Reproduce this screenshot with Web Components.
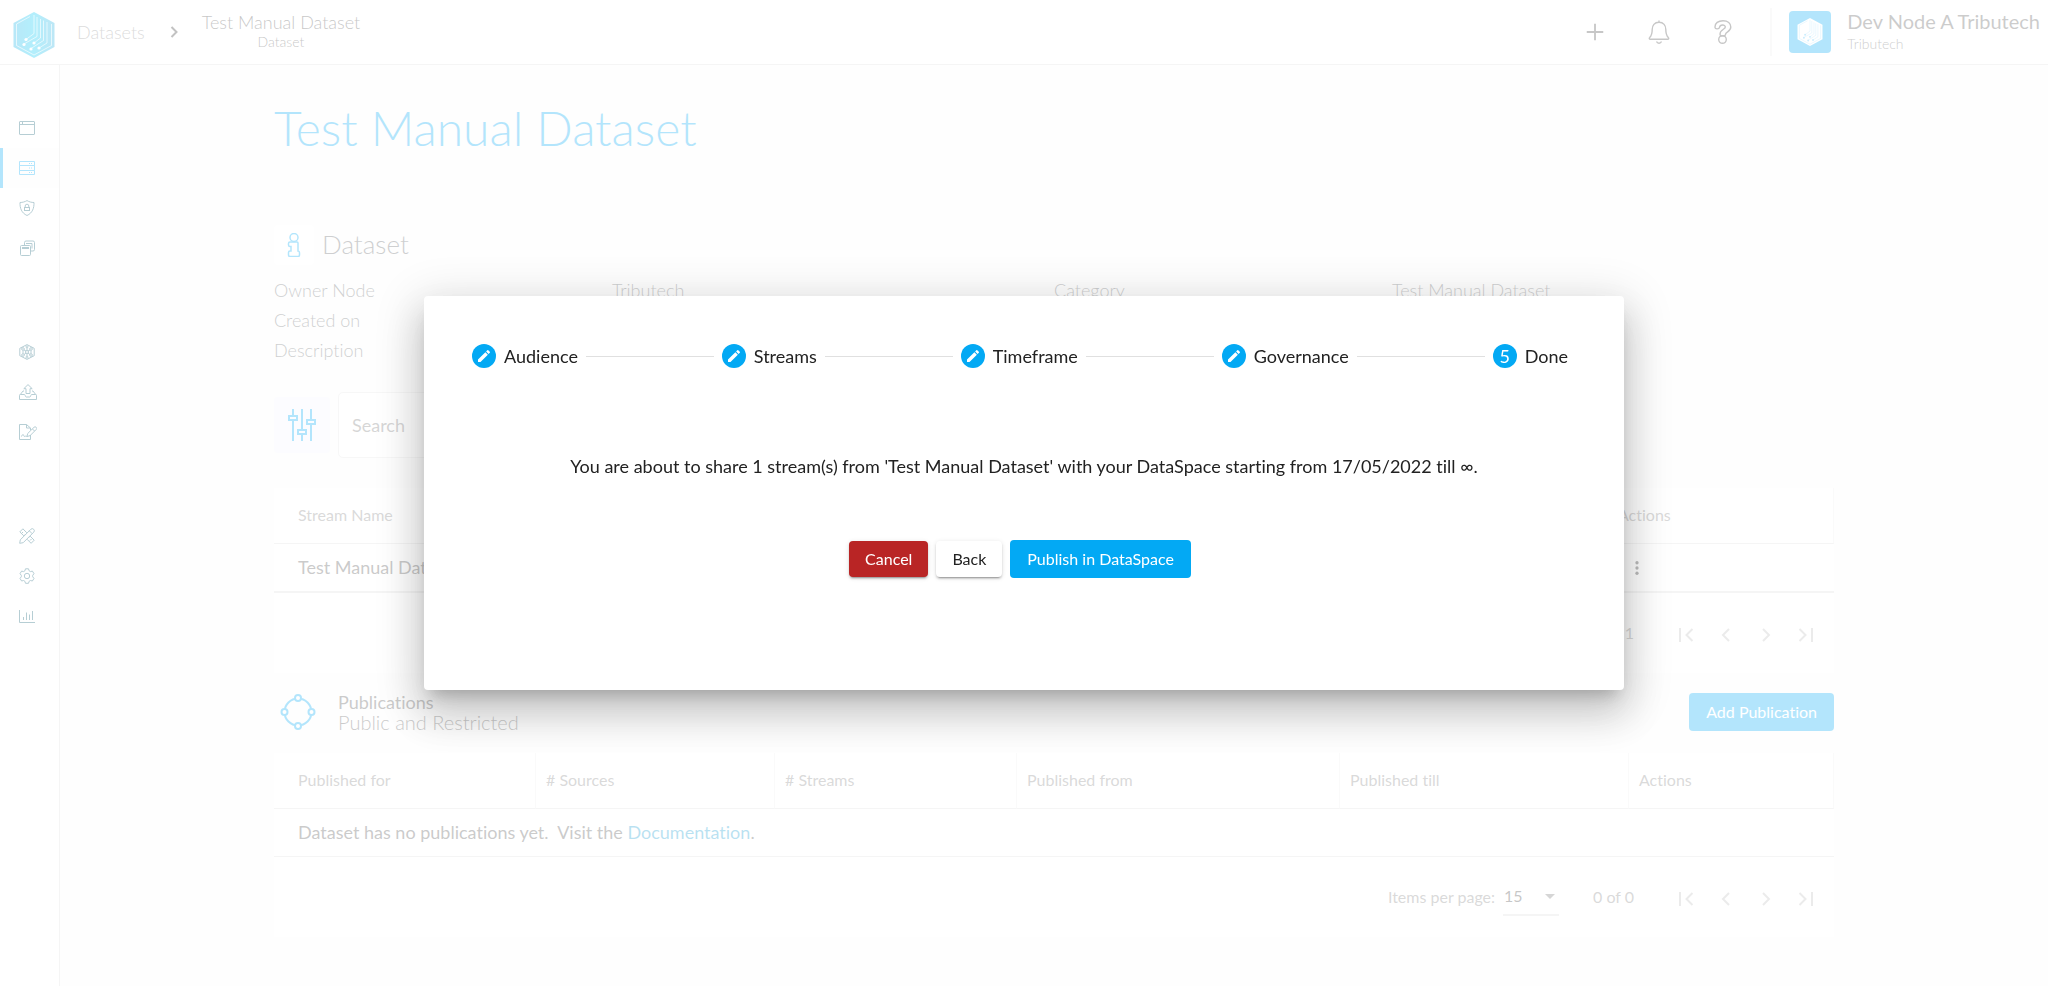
<!DOCTYPE html>
<html lang="en">
<head>
<meta charset="utf-8">
<title>Test Manual Dataset</title>
<style>
  body { margin: 0; background: #fafafa; color: #222; font-family: Lato, "Open Sans", sans-serif; font-size: 18px; font-variant-ligatures: none; }
</style>
</head>
<body>
<data-app></data-app>
<script>
const define = (name, html) => {
  const template = document.createElement('template');
  template.innerHTML = `<style>*{box-sizing:border-box}</style>` + html;
  customElements.define(name, class extends HTMLElement {
    constructor() {
      super();
      this.attachShadow({ mode: 'open' }).append(template.content.cloneNode(true));
    }
  });
};

/* Icon set: 24-unit artwork unless a viewBox is given */
const ICONS = {
  window: ['0 0 16 16', '<rect x=".5" y="1.5" width="15" height="13" rx=".5"/><path d="M.5 4.5h15M3.5 1.5v3"/>'],
  servers: ['0 0 16 16', '<path d="M.5 1.5h15v4H.5zM.5 5.5h15v5H.5zM.5 10.500h15v4H.5z"/><path d="M10 3.500h1M12 3.500h1M10 8h1M12 8h1M10 12.500h1M12 12.500h1"/>'],
  shield: ['0 0 16 16', '<path d="M8 .6C10 1.800 12.500 2.500 15 2.500C15.200 8 13.500 13 8 15.500C2.500 13 .8 8 1 2.500C3.500 2.500 6 1.800 8 .6Z"/><rect x="5.500" y="7.500" width="5" height="3"/><path d="M6.200 7.500V6a1.800 1.800 0 0 1 3.600 0v1.500"/>'],
  stack: ['0 0 16 16', '<rect x="1.500" y="5.500" width="10" height="10" rx="1"/><rect x="3.500" y="7.500" width="6" height="1"/><path d="M5.500 5.500V2.500a1.500 1.500 0 0 1 1.500-1.500h7a1.500 1.500 0 0 1 1.500 1.500v7a1.500 1.500 0 0 1-1.500 1.500h-2.500M7 3.500h6v5"/>'],
  network: ['0 0 16 16', '<path d="M8 .6 15.200 4.300v7.400L8 15.400.8 11.700V4.300Z"/><circle cx="8" cy="8" r="1.500"/><circle cx="4" cy="5" r="1.300"/><circle cx="12" cy="5" r="1.300"/><circle cx="4" cy="11" r="1.300"/><circle cx="12" cy="11" r="1.300"/><circle cx="8" cy="2.800" r="1"/><circle cx="8" cy="13.200" r="1"/><path d="M5 6l2 1M11 6 9 7M5 10.500 7 9M11 10.500 9 9M8 4v2.500M8 9.500V12M4 6.500v3M12 6.500v3"/>'],
  upload: ['0 0 18 16', '<path d="M9 .6 13.200 4.700H11v4.800H7V4.700H4.800Z"/><path d="M5 7H4L1.300 10.500M13 7h1l2.700 3.500M.5 15.500v-4.200c0-.5.300-.8.800-.8H5.500c.8 0 .7 2.500 1.700 2.500h3.600c1 0 .9-2.500 1.700-2.500h4.200c.5 0 .8.300.8.800v4.200Z"/>'],
  sign: ['0 0 18 16', '<path d="M11.500 11v4.500H.5V.5H7.500L11.500 4v2M7.500.5V4h4"/><path d="M8 12.500 8.700 9.500 15 3.300a1.500 1.500 0 0 1 2.200 2.200L11 11.700ZM13.500 5l2 2"/><path d="M2 12.500c1 0 1-2 2-2s.5 2 1.500 2S6.500 11.500 8 12.500"/>'],
  design: ['0 0 16 16', '<path d="M.7 15.300 1.300 11.800 11.800 1.300a1.900 1.900 0 0 1 2.900 2.900L4.200 14.700ZM10.300 2.800l2.900 2.900"/><path d="M6.300 6.300 4.800 7.800.8 3.900 3.900.8 7.800 4.800M2.500 5.500 4 4M9.700 9.700l1.500-1.500 4 4-3.100 3.100-4-4M11 12.500l1.500-1.500"/>'],
  gear: ['0 0 16 16', '<circle cx="8" cy="8" r="2.700"/><path d="M6.500.8h3l.6 2 1.300.8 2-.5 1.600 2.600-1.300 1.600v1.500l1.300 1.600-1.600 2.600-2-.5-1.300.8-.6 2h-3l-.6-2-1.300-.8-2 .5L1 10.400l1.300-1.600V7.300L1 5.700l1.600-2.600 2 .5 1.300-.8Z"/>'],
  chart: ['0 0 16 16', '<path d="M.5 2v12.500H16M4.500 12V9M7.500 12V4.500M10.500 12V6.500M13.500 12V3"/>'],
  info: ['0 0 24 24', '<circle cx="12" cy="4.500" r="4"/><path d="M8 9H15a1 1 0 0 1 1 1v8c1.200 0 1.500.8 1.500 1.800V22c0 1-.5 1.500-1.500 1.500H8c-1 0-1.500-.5-1.500-1.500V19.500c0-1 .5-1.500 1.500-1.500h1V13.500H8c-1 0-1.500-.5-1.500-1.500v-1.500C6.500 9.500 7 9 8 9Z"/>'],
  sliders: ['0 0 28 32', '<path d="M5 0v6M5 11v21M14 0v20M14 25v7M23 0v10M23 15v17"/><rect x="1" y="7" width="8" height="4"/><rect x="10" y="21" width="8" height="4"/><rect x="19" y="11" width="8" height="4"/>'],
  ring: ['0 0 36 36', '<circle cx="18" cy="18" r="13.500"/><g fill="#fff"><circle cx="18" cy="4" r="3"/><circle cx="18" cy="32" r="3"/><circle cx="4.500" cy="18" r="3"/><circle cx="31.500" cy="18" r="3"/></g>'],
  chevron: ['0 0 8 12', '<path d="M1.500 1 6.500 6 1.500 11"/>'],
  plus: ['0 0 24 24', '<path d="M12 3v18M3 12h18"/>'],
  bell: ['0 0 24 24', '<path d="M12 .5v1.800M12 2.300c4.500 0 6.800 3.200 6.800 7.200 0 3.800.6 6 2.500 8 .8.800.4 1.700-.6 1.700H3.300c-1 0-1.400-.9-.6-1.700 1.900-2 2.500-4.200 2.500-8 0-4 2.300-7.200 6.800-7.200ZM9.500 21.500a2.700 2.700 0 0 0 5 0"/>'],
  help: ['0 0 24 24', '<circle cx="11.500" cy="19.500" r="3.800"/><path d="M4 7.500C3.700 3 7.500.7 12 .7c4.800 0 7.800 2.600 7.800 6.300 0 4.600-5 4.700-5.300 7.300-.1 1-.5 1.500-1.500 1.500H10.500c-1 0-1.500-.6-1.500-1.500 0-5 5.300-4.800 5.300-7.200 0-3-5.300-2.700-5.800.300C8.200 9.200 4.200 9.500 4 7.500Z"/>'],
  first: ['0 0 24 24', '<path d="M6 5v14M18.500 6 12.500 12l6 6"/>'],
  prev: ['0 0 24 24', '<path d="M15 6 9 12l6 6"/>'],
  next: ['0 0 24 24', '<path d="M9 6l6 6-6 6"/>'],
  last: ['0 0 24 24', '<path d="M18 5v14M5.500 6l6 6-6 6"/>'],
  pencil: ['0 0 24 24', '<path fill="currentColor" stroke="none" d="M3 17.250V21h3.750L17.810 9.940l-3.750-3.750ZM20.710 7.040a1 1 0 0 0 0-1.410l-2.340-2.340a1 1 0 0 0-1.410 0l-1.830 1.830 3.750 3.750Z"/>'],
  dots: ['0 0 24 24', '<g fill="currentColor" stroke="none"><circle cx="12" cy="5" r="2.200"/><circle cx="12" cy="12" r="2.200"/><circle cx="12" cy="19" r="2.200"/></g>'],
};
customElements.define('line-icon', class extends HTMLElement {
  constructor() {
    super();
    this.attachShadow({ mode: 'open' });
  }
  connectedCallback() {
    const [box, art] = ICONS[this.getAttribute('name')];
    this.shadowRoot.innerHTML = `<style>
      :host{display:inline-flex;flex:none;width:24px;height:24px;stroke-width:1}
      svg{width:100%;height:100%;fill:none;stroke:currentColor;stroke-width:inherit}
    </style><svg viewBox="${box}" aria-hidden="true">${art}</svg>`;
  }
});

define('brand-mark', `
<style>
  :host { display: block; width: 42px; height: 46px; flex: none; }
  svg { display: block; width: 100%; height: 100%; }
</style>
<svg viewBox="0 0 42 46" aria-hidden="true">
  <defs><linearGradient id="g" x1="0" y1="0" x2="1" y2="0"><stop offset="0" stop-color="#12b0e6"/><stop offset=".5" stop-color="#00c8f4"/><stop offset="1" stop-color="#23aee0"/></linearGradient></defs>
  <path d="M21 0 41.500 11v24L21 46 .5 35V11Z" style="fill:var(--mark, url(#g))"/>
  <g fill="none" style="stroke:var(--trace-color, #fff)" stroke-width=".8" stroke-opacity=".8">
    <path d="M17 4.500 3.500 12v21.500L21 43 38.500 33.500V12"/>
    <path d="M21 3V21.500L13 27.500M24 5v19.500L11 32M27.500 7v19L21 31M30.500 8.500v20L18 36.500M34 10v21L26 36"/>
  </g>
  <g style="fill:var(--trace-color, #fff)"><circle cx="13" cy="27.500" r="1.600"/><circle cx="11" cy="32.500" r="1.600"/><circle cx="21" cy="31" r="1.600"/><circle cx="18" cy="37" r="1.600"/><circle cx="26" cy="36" r="1.600"/></g>
</svg>`);

define('top-bar', `
<style>
  :host { display: flex; align-items: center; height: 65px; padding: 0 8px 0 13px; background: #fff; border-bottom: 1px solid #ddd; }
  .logo { margin-top: 5px; }
  nav { display: flex; align-items: center; margin-left: 22px; font-weight: 300; }
  a { color: #888; text-decoration: none; }
  .sep { width: 8px; height: 12px; margin: 0 24px 0 25px; stroke-width: 2; color: #333; }
  .here { display: flex; flex-direction: column; align-items: center; line-height: 22px; padding-bottom: 4px; color: #444; }
  .here small { font-size: 14px; line-height: 17px; }
  .tools { display: flex; gap: 24px; margin-left: auto; }
  button { display: flex; align-items: center; justify-content: center; width: 40px; height: 40px; padding: 0; border: 0; background: none; color: #444; }
  .tools line-icon { stroke-width: 1.4; }
  .tools .plus { width: 22px; height: 22px; stroke-width: 2; }
  .user { display: flex; align-items: center; margin-left: 27px; padding-left: 17px; border-left: 2px solid #eee; height: 48px; }
  .avatar { display: flex; align-items: center; justify-content: center; width: 42px; height: 42px; border-radius: 4px; background: #03a9f4; }
  .avatar brand-mark { width: 26px; height: 28px; --mark: #fff; --trace-color: #50c0f6; }
  .who { display: flex; flex-direction: column; margin-left: 16px; padding-bottom: 2px; font-size: 20px; line-height: 26px; color: #555; font-weight: 400; }
  .who small { font-size: 14px; line-height: 20px; font-weight: 300; }
</style>
<brand-mark class="logo"></brand-mark>
<nav aria-label="Breadcrumb">
  <a href="#datasets">Datasets</a>
  <line-icon class="sep" name="chevron"></line-icon>
  <div class="here"><span>Test Manual Dataset</span><small>Dataset</small></div>
</nav>
<div class="tools">
  <button aria-label="Add"><line-icon class="plus" name="plus"></line-icon></button>
  <button aria-label="Notifications"><line-icon name="bell"></line-icon></button>
  <button aria-label="Help"><line-icon name="help"></line-icon></button>
</div>
<div class="user">
  <div class="avatar"><brand-mark></brand-mark></div>
  <div class="who"><span>Dev Node A Tributech</span><small>Tributech</small></div>
</div>`);

define('side-nav', `
<style>
  :host { display: block; width: 60px; flex: none; padding-top: 43px; background: #fff; border-right: 1px solid #ddd; }
  nav + nav { margin-top: 64px; }
  nav a { display: flex; align-items: center; height: 40px; padding-left: 19px; color: #0d5a70; }
  nav a[aria-current] { padding-left: 16px; border-left: 3px solid #03a9f4; color: #03a9f4; background: #fafafa; }
  line-icon { width: 16px; height: 16px; }
  .wide { width: 18px; }
</style>
<nav aria-label="Data">
  <a href="#overview" aria-label="Overview"><line-icon name="window"></line-icon></a>
  <a href="#datasets" aria-label="Datasets" aria-current="page"><line-icon name="servers"></line-icon></a>
  <a href="#access" aria-label="Access"><line-icon name="shield"></line-icon></a>
  <a href="#catalog" aria-label="Catalog"><line-icon name="stack"></line-icon></a>
</nav>
<nav aria-label="Tools">
  <a href="#network" aria-label="Network"><line-icon name="network"></line-icon></a>
  <a href="#upload" aria-label="Upload"><line-icon class="wide" name="upload"></line-icon></a>
  <a href="#sign" aria-label="Sign"><line-icon class="wide" name="sign"></line-icon></a>
</nav>
<nav aria-label="Administration">
  <a href="#design" aria-label="Design"><line-icon name="design"></line-icon></a>
  <a href="#settings" aria-label="Settings"><line-icon name="gear"></line-icon></a>
  <a href="#reports" aria-label="Reports"><line-icon name="chart"></line-icon></a>
</nav>`);

define('dataset-info', `
<style>
  :host { display: block; font-weight: 300; color: #5c5f63; }
  header { display: flex; align-items: center; gap: 8px; margin-bottom: 10px; }
  .tile { display: flex; align-items: center; justify-content: center; width: 40px; height: 40px; border-radius: 4px; background: #fff; color: #03a9f4; }
  .tile line-icon { stroke-width: 1.500; }
  h2 { margin: 0; padding-bottom: 2px; font-size: 26px; line-height: 38px; font-weight: 300; }
  dl { display: grid; grid-template-columns: 13fr 17fr 13fr 17fr; margin: 0; line-height: 30px; }
  dt { grid-column: 1; }
  dt.second { grid-column: 3; }
  dd { margin: 0; }
</style>
<header><span class="tile"><line-icon name="info"></line-icon></span><h2>Dataset</h2></header>
<dl>
  <dt>Owner Node</dt><dd>Tributech</dd>
  <dt class="second">Category</dt><dd>Test Manual Dataset</dd>
  <dt>Created on</dt><dd></dd>
  <dt>Description</dt><dd></dd>
</dl>`);

define('search-bar', `
<style>
  :host { display: flex; align-items: center; gap: 8px; }
  button { display: flex; align-items: center; justify-content: center; width: 56px; height: 56px; padding: 0; border: 0; border-radius: 4px; background: #f5f6fd; color: #03a9f4; }
  line-icon { width: 28px; height: 32px; stroke-width: 2; }
  input { width: 40%; height: 66px; padding: 0 13px; border: 1px solid #e4e4e4; border-radius: 5px; background: #fff; font: inherit; color: #222; }
  input::placeholder { color: #777; opacity: 1; }
</style>
<button aria-label="Filters"><line-icon name="sliders"></line-icon></button>
<input type="search" placeholder="Search" aria-label="Search">`);

define('page-picker', `
<style>
  :host { display: flex; align-items: center; justify-content: flex-end; height: 80px; padding: 4px 8px 0 0; font-size: 16px; color: #828282; }
  label { display: flex; align-items: center; gap: 8px; }
  .box { position: relative; display: flex; }
  select { appearance: none; width: 56px; height: 36px; padding: 2px 0 4px 1px; margin-top: 2px; border: 0; border-bottom: 2px solid #ddd; background: none; font: inherit; color: #444; }
  .box::after { content: ""; position: absolute; right: 4px; top: 16px; border: 5px solid transparent; border-top-color: #757575; border-bottom: 0; pointer-events: none; }
  .range { margin: 0 32px 0 34px; }
  label, .range { padding-bottom: 5px; }
  button { display: flex; align-items: center; justify-content: center; width: 40px; height: 40px; padding: 0; border: 0; background: none; color: #bdbdbd; }
  line-icon { width: 24px; height: 24px; stroke-width: 2; }
</style>
<label>Items per page: <span class="box"><select><option>15</option><option>30</option></select></span></label>
<span class="range"><slot></slot></span>
<button aria-label="First page"><line-icon name="first"></line-icon></button>
<button aria-label="Previous page"><line-icon name="prev"></line-icon></button>
<button aria-label="Next page"><line-icon name="next"></line-icon></button>
<button aria-label="Last page"><line-icon name="last"></line-icon></button>`);

const TABLE_STYLE = `
  :host { display: block; background: #fff; }
  table { width: 100%; table-layout: fixed; border-collapse: separate; border-spacing: 0; text-align: left; }
  th { height: 56px; padding: 0 10px 2px; border-bottom: 1px solid #ddd; border-right: 1px solid #eee; font-size: 16px; font-weight: 400; color: #828282; }
  td { height: 48px; padding: 0 10px 2px; border-bottom: 1px solid #ddd; color: #505050; }
  th:first-child, td:first-child { padding-left: 24px; }`;

define('stream-table', `
<style>${TABLE_STYLE}
  td { height: 49px; border-bottom-width: 2px; }
  .act { width: 226px; }
  td:last-child { padding-bottom: 0; }
  button { display: flex; align-items: center; justify-content: center; width: 24px; height: 24px; padding: 0; border: 0; margin-left: 7px; background: none; color: #222; }
  line-icon { width: 18px; height: 18px; }
</style>
<table>
  <colgroup><col><col class="act"></colgroup>
  <thead><tr><th>Stream Name</th><th>Actions</th></tr></thead>
  <tbody><tr><td>Test Manual Dataset Stream</td><td><button aria-label="Stream actions"><line-icon name="dots"></line-icon></button></td></tr></tbody>
</table>
<page-picker>1 – 1 of 1</page-picker>`);

define('publication-table', `
<style>${TABLE_STYLE}
  a { color: #149bd0; text-decoration: none; }
</style>
<table>
  <colgroup><col width="262"><col width="239"><col width="242"><col width="323"><col width="289"><col></colgroup>
  <thead><tr><th>Published for</th><th># Sources</th><th># Streams</th><th>Published from</th><th>Published till</th><th>Actions</th></tr></thead>
  <tbody><tr><td colspan="6">Dataset has no publications yet. &nbsp;Visit the <a href="#docs">Documentation</a>.</td></tr></tbody>
</table>
<page-picker>0 of 0</page-picker>`);

define('publication-header', `
<style>
  :host { display: flex; align-items: center; height: 80px; padding: 0 0 2px 6px; color: #505050; }
  .ring { width: 36px; height: 36px; stroke-width: 2; color: #03a9f4; }
  h3 { margin: 0 auto 0 22px; font-size: 18px; line-height: 20px; font-weight: 400; }
  h3 small { display: block; font-size: 20px; line-height: 21px; font-weight: 300; }
  button { height: 38px; padding: 0 17px 2px; border: 0; border-radius: 4px; background: #03a9f4; color: #fff; font: inherit; font-size: 16px; }
</style>
<line-icon class="ring" name="ring"></line-icon>
<h3>Publications<small>Public and Restricted</small></h3>
<button>Add Publication</button>`);

define('step-item', `
<style>
  :host { display: flex; align-items: center; flex: none; gap: 8px; padding-right: 8px; }
  .dot { display: flex; align-items: center; justify-content: center; width: 24px; height: 24px; border-radius: 50%; background: #03a9f4; color: #fff; }
</style>
<span class="dot"><slot name="mark"></slot></span><slot></slot>`);

define('publish-dialog', `
<style>
  :host { position: fixed; inset: 0; display: flex; align-items: center; justify-content: center; background: rgba(255,255,255,.7); }
  section { width: 1200px; max-width: 100%; padding: 24px 24px 112px; border-radius: 4px; background: #fff; color: #222;
    box-shadow: 0 11px 15px -7px rgba(0,0,0,.2), 0 24px 38px 3px rgba(0,0,0,.14), 0 9px 46px 8px rgba(0,0,0,.12); }
  .steps { display: flex; align-items: center; height: 72px; padding: 0 24px; }
  .steps hr { flex: 1; height: 0; margin: 0 8px 0 0; border: 0; border-top: 1px solid #e0e0e0; }
  .steps line-icon { width: 16px; height: 16px; }
  p { margin: 62px 0; line-height: 24px; text-align: center; }
  .actions { display: flex; justify-content: center; align-items: center; gap: 8px; padding-right: 8px; height: 38px; }
  button { height: 36px; padding: 0 16px 2px; border: 0; border-radius: 4px; font: inherit; font-size: 16px; color: #fff; box-shadow: 0 3px 1px -2px rgba(0,0,0,.2), 0 2px 2px rgba(0,0,0,.14), 0 1px 5px rgba(0,0,0,.12); }
  .cancel { background: #b92525; }
  .back { background: #fff; color: #222; }
  .publish { height: 38px; padding: 0 17px 2px; background: #03a9f4; box-shadow: none; }
</style>
<section role="dialog" aria-label="Publish dataset">
  <div class="steps">
    <step-item><line-icon slot="mark" name="pencil"></line-icon>Audience</step-item><hr>
    <step-item><line-icon slot="mark" name="pencil"></line-icon>Streams</step-item><hr>
    <step-item><line-icon slot="mark" name="pencil"></line-icon>Timeframe</step-item><hr>
    <step-item><line-icon slot="mark" name="pencil"></line-icon>Governance</step-item><hr>
    <step-item><span slot="mark">5</span>Done</step-item>
  </div>
  <p>You are about to share 1 stream(s) from 'Test Manual Dataset' with your DataSpace starting from 17/05/2022 till ∞.</p>
  <div class="actions"><button class="cancel">Cancel</button><button class="back">Back</button><button class="publish">Publish in DataSpace</button></div>
</section>`);

define('data-app', `
<style>
  :host { display: flex; flex-direction: column; min-height: 100vh; }
  .body { display: flex; flex: 1; }
  main { flex: 1; min-width: 0; padding-top: 33px; }
  .page { max-width: 1560px; margin: 0 auto; }
  h1 { margin: 0 0 67px; font-size: 48px; line-height: 60px; font-weight: 300; color: #03a9f4; }
  search-bar { margin: 27px 0 30px; }
</style>
<top-bar></top-bar>
<div class="body">
  <side-nav></side-nav>
  <main><div class="page">
    <h1>Test Manual Dataset</h1>
    <dataset-info></dataset-info>
    <search-bar></search-bar>
    <stream-table></stream-table>
    <publication-header></publication-header>
    <publication-table></publication-table>
  </div></main>
</div>
<publish-dialog></publish-dialog>`);
</script>
</body>
</html>
